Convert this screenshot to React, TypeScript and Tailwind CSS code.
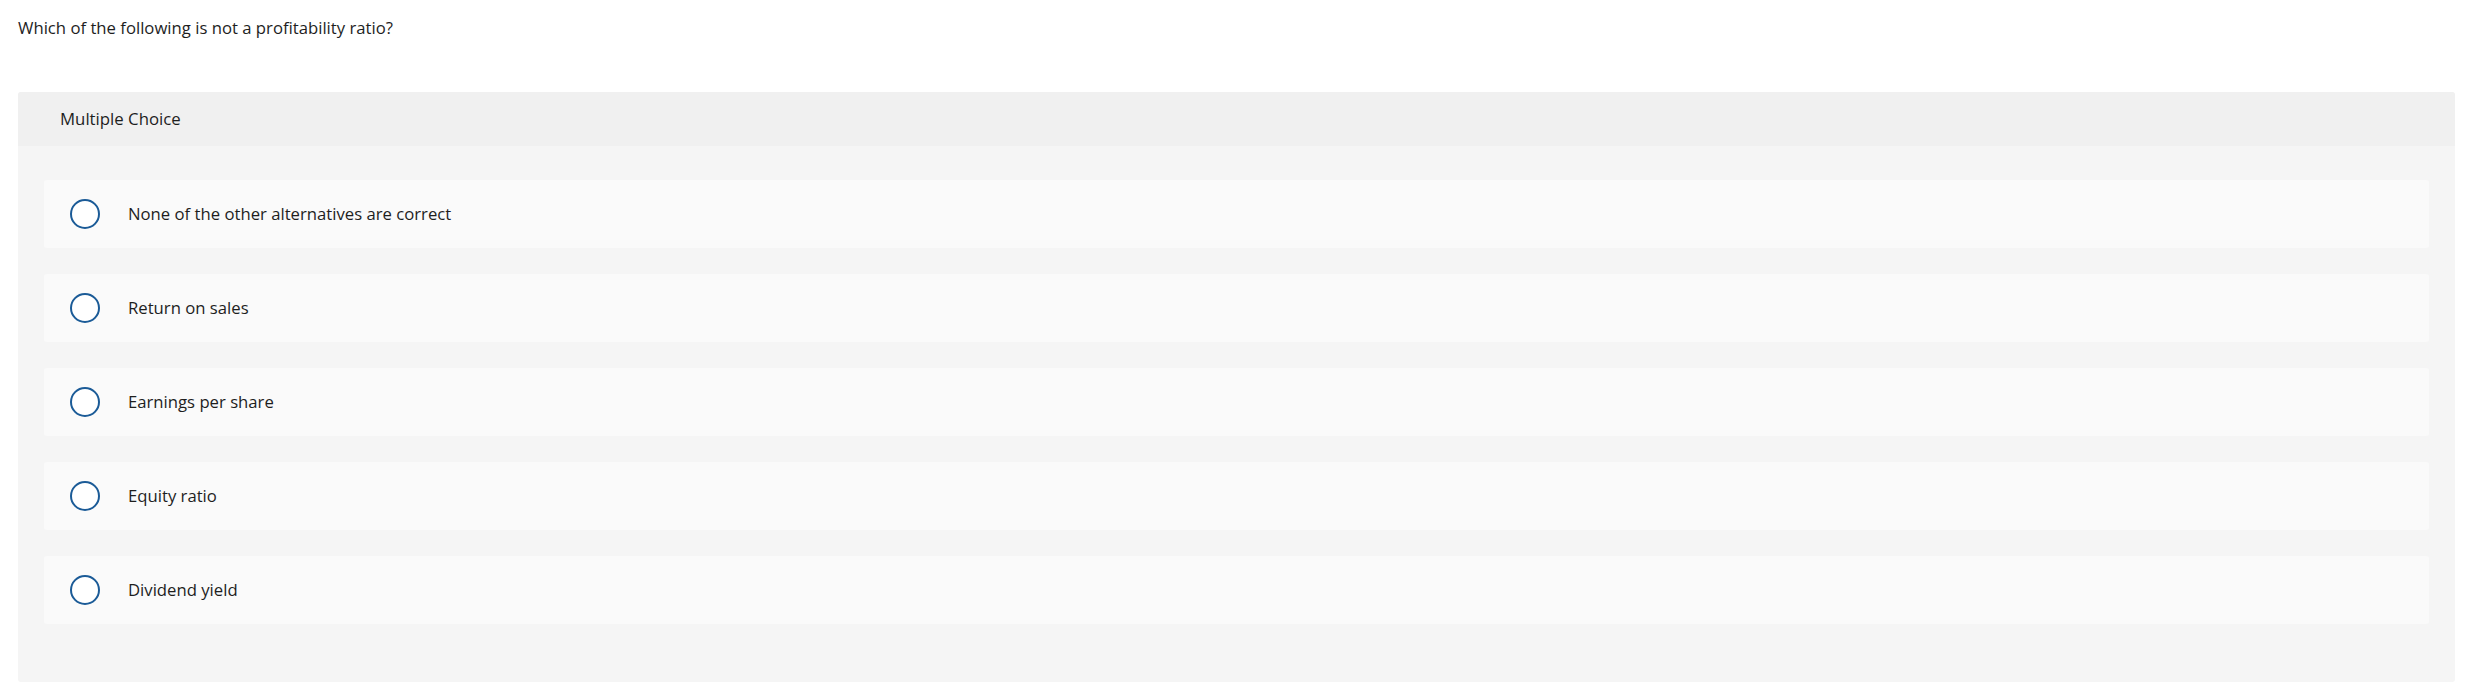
const OPTIONS = [
  'None of the other alternatives are correct',
  'Return on sales',
  'Earnings per share',
  'Equity ratio',
  'Dividend yield',
];

function Radio() {
  return (
    <span className="shrink-0 w-[30px] h-[30px] rounded-full border-2 border-[#1b5b97] bg-white" />
  );
}

export default function App() {
  return (
    <div className="min-h-[698px] bg-white font-['Open_Sans',sans-serif] text-[#1e1e1e]">
      <p className="px-[18px] pt-[17px] text-[16.7px] leading-[22px]">Which of the following is not a profitability ratio?</p>

      <div className="mx-[18px] mt-[53px] w-[2437px] rounded-[3px] overflow-hidden bg-[#f5f5f5]">
        <div className="h-[54px] flex items-center pl-[42px] bg-[#f0f0f0] text-[16.8px]">Multiple Choice</div>
        <div className="px-[26px] pt-[34px] pb-[58px] flex flex-col gap-[26px]">
          {OPTIONS.map(o => (
            <label key={o} className="h-[68px] flex items-center rounded-[3px] bg-[#fafafa] pl-[26px]">
              <Radio />
              <span className="ml-[28px] text-[16.7px]">{o}</span>
            </label>
          ))}
        </div>
      </div>
    </div>
  );
}
